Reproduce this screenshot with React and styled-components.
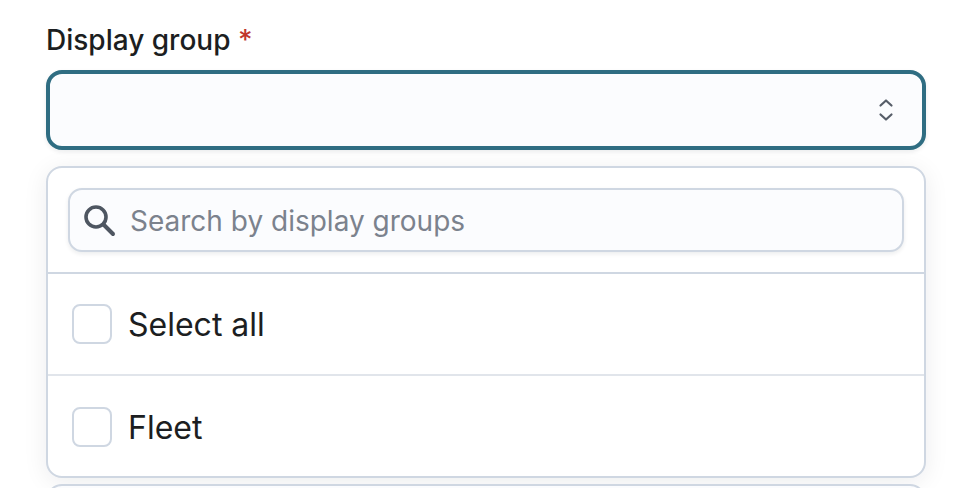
import React from "react"
import styled, {createGlobalStyle} from "styled-components"

const GlobalStyle = createGlobalStyle`
  html, body {
    margin: 0;
    height: 100%;
    background: #fff;
    overflow: hidden;
  }
  body {
    font-family: Inter, "Liberation Sans", sans-serif;
    color: #1c1e21;
  }
`

const options = ["Select all", "Fleet"]

const App = () => {
    return (
        <Page>
            <GlobalStyle />
            <Label>
                Display group <Required>*</Required>
            </Label>
            <SelectBox>
                <svg width="20" height="28" viewBox="0 0 20 28" fill="none" stroke="#565d68" strokeWidth="2.2" strokeLinecap="round" strokeLinejoin="round">
                    <path d="M4.5 9.5 10 4.5 15.5 9.5" />
                    <path d="M4.5 18.5 10 23.5 15.5 18.5" />
                </svg>
            </SelectBox>
            <Panel>
                <SearchWrap>
                    <SearchField>
                        <svg width="34" height="34" viewBox="0 0 34 34" fill="none" stroke="#4e5661" strokeLinecap="round">
                            <circle cx="14" cy="14" r="10" strokeWidth="3.6" />
                            <path d="M21.5 21.5 31 31" strokeWidth="4" />
                        </svg>
                        <SearchText>Search by display groups</SearchText>
                    </SearchField>
                </SearchWrap>
                {options.map((o) => (
                    <OptionRow key={o}>
                        <Check />
                        <OptionText>{o}</OptionText>
                    </OptionRow>
                ))}
            </Panel>
            <NextField />
        </Page>
    )
}

const Page = styled.div`
    width: 970px;
    height: 488px;
    box-sizing: border-box;
    padding: 20px 44px 0 46px;
    overflow: hidden;
    background: #fff;
`

const Label = styled.div`
    font-size: 28px;
    line-height: 40px;
    height: 40px;
    font-weight: 450;
    color: #1c1e21;
    margin-bottom: 10px;
`

const Required = styled.span`
    color: #c0362c;
`

const SelectBox = styled.div`
    height: 80px;
    box-sizing: border-box;
    border: 4px solid #2f6d82;
    border-radius: 16px;
    background: #fbfcfe;
    box-shadow: 0 2px 4px rgba(16, 24, 40, 0.08);
    display: flex;
    align-items: center;
    justify-content: flex-end;
    padding-right: 26px;
`

const Panel = styled.div`
    height: 312px;
    box-sizing: border-box;
    margin-top: 16px;
    border: 2px solid #cfd7e2;
    border-radius: 16px;
    background: #fff;
    box-shadow: 0 4px 24px rgba(16, 24, 40, 0.08);
    overflow: hidden;
`

const SearchWrap = styled.div`
    height: 106px;
    box-sizing: border-box;
    padding: 20px;
    border-bottom: 2px solid #cfd7e2;
`

const SearchField = styled.div`
    height: 64px;
    box-sizing: border-box;
    border: 2px solid #cfd7e2;
    border-radius: 14px;
    background: #fbfcfe;
    box-shadow: 0 2px 4px rgba(16, 24, 40, 0.08);
    display: flex;
    align-items: center;
    gap: 14px;
    padding-left: 12px;
`

const SearchText = styled.span`
    font-size: 28px;
    padding-top: 2px;
    color: #7b828d;
`

const OptionRow = styled.div`
    height: 102px;
    box-sizing: border-box;
    display: flex;
    align-items: center;
    gap: 16px;
    padding-left: 24px;
    border-bottom: 2px solid #e1e5eb;

    &:last-child {
        border-bottom: none;
    }
`

const Check = styled.span`
    width: 40px;
    height: 40px;
    box-sizing: border-box;
    border: 2px solid #cfd7e2;
    border-radius: 8px;
    background: #fff;
`

const OptionText = styled.span`
    font-size: 32px;
    color: #1c1e21;
`

const NextField = styled.div`
    height: 40px;
    margin-top: 6px;
    box-sizing: border-box;
    border: 2px solid #cfd7e2;
    border-radius: 16px;
    background: #fbfcfe;
`

export default App
